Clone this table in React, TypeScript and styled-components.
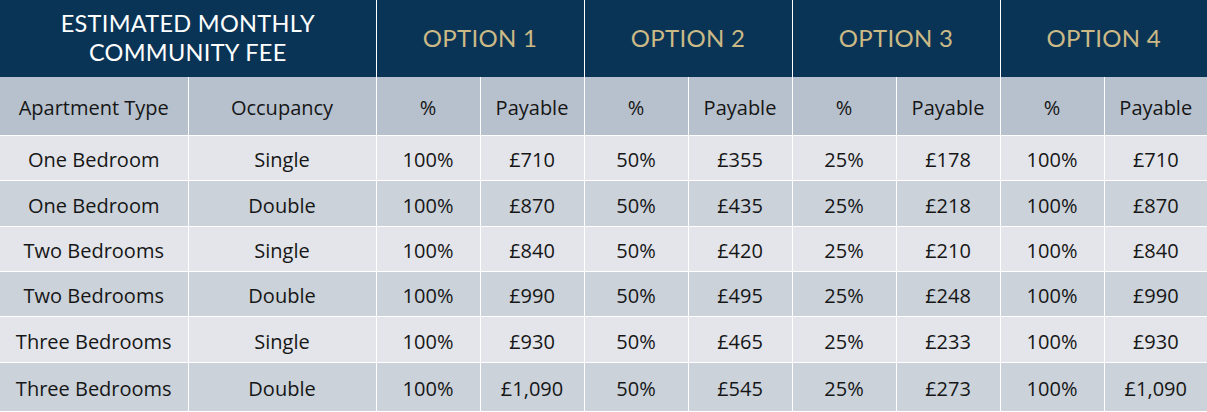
import React from "react";
import styled, { createGlobalStyle } from "styled-components";

const Global = createGlobalStyle`
  html, body { margin: 0; padding: 0; background: #ffffff; }
  body { font-family: "Open Sans", "Noto Sans", sans-serif; }
`;

const Table = styled.table`
  border-collapse: collapse;
  table-layout: fixed;
  width: 1207px;
`;

const Col = styled.col<{ $w: number }>`
  width: ${(p) => p.$w}px;
`;

const HeadCell = styled.th<{ $gold?: boolean }>`
  background: #0a3456;
  color: ${(p) => (p.$gold ? "#cbb986" : "#ffffff")};
  font-family: "Lato", "Open Sans", sans-serif;
  font-weight: 400;
  font-size: ${(p) => (p.$gold ? "24px" : "23.5px")};
  line-height: 29px;
  letter-spacing: 0.3px;
  height: 75px;
  padding: 0 0 2px;
  text-align: center;
  vertical-align: middle;
  border-right: 1px solid #ffffff;
  &:last-child { border-right: none; }
`;

const SubCell = styled.th`
  background: #b7c1cd;
  color: #161616;
  font-weight: 400;
  font-size: 20px;
  height: 56px;
  padding: 2px 0 0;
  text-align: center;
  border-right: 1px solid #ffffff;
  border-bottom: 1px solid #ffffff;
  &:last-child { border-right: none; }
`;

const Row = styled.tr<{ $alt: boolean }>`
  background: ${(p) => (p.$alt ? "#cbd2da" : "#e3e5ea")};
`;

const Cell = styled.td<{ $h: number }>`
  color: #161616;
  font-size: 20px;
  height: ${(p) => p.$h}px;
  padding: 3px 0 0;
  text-align: center;
  vertical-align: middle;
  border-right: 1px solid #ffffff;
  border-bottom: 1px solid #ffffff;
  &:last-child { border-right: none; }
`;

const rows = [
  ["One Bedroom", "Single", "100%", "£710", "50%", "£355", "25%", "£178", "100%", "£710"],
  ["One Bedroom", "Double", "100%", "£870", "50%", "£435", "25%", "£218", "100%", "£870"],
  ["Two Bedrooms", "Single", "100%", "£840", "50%", "£420", "25%", "£210", "100%", "£840"],
  ["Two Bedrooms", "Double", "100%", "£990", "50%", "£495", "25%", "£248", "100%", "£990"],
  ["Three Bedrooms", "Single", "100%", "£930", "50%", "£465", "25%", "£233", "100%", "£930"],
  ["Three Bedrooms", "Double", "100%", "£1,090", "50%", "£545", "25%", "£273", "100%", "£1,090"],
];

const heights = [41, 42, 41, 41, 42, 45];

export default function App() {
  return (
    <>
      <Global />
      <Table>
        <colgroup>
          <Col $w={188} />
          <Col $w={188} />
          {Array.from({ length: 7 }).map((_, i) => (
            <Col key={i} $w={104} />
          ))}
          <Col $w={103} />
        </colgroup>
        <thead>
          <tr>
            <HeadCell colSpan={2}>
              ESTIMATED MONTHLY
              <br />
              COMMUNITY FEE
            </HeadCell>
            <HeadCell colSpan={2} $gold>OPTION 1</HeadCell>
            <HeadCell colSpan={2} $gold>OPTION 2</HeadCell>
            <HeadCell colSpan={2} $gold>OPTION 3</HeadCell>
            <HeadCell colSpan={2} $gold>OPTION 4</HeadCell>
          </tr>
          <tr>
            <SubCell>Apartment Type</SubCell>
            <SubCell>Occupancy</SubCell>
            {[1, 2, 3, 4].flatMap((n) => [
              <SubCell key={`p${n}`}>%</SubCell>,
              <SubCell key={`y${n}`}>Payable</SubCell>,
            ])}
          </tr>
        </thead>
        <tbody>
          {rows.map((r, i) => (
            <Row key={i} $alt={i % 2 === 1}>
              {r.map((c, j) => (
                <Cell key={j} $h={heights[i]}>{c}</Cell>
              ))}
            </Row>
          ))}
        </tbody>
      </Table>
    </>
  );
}
